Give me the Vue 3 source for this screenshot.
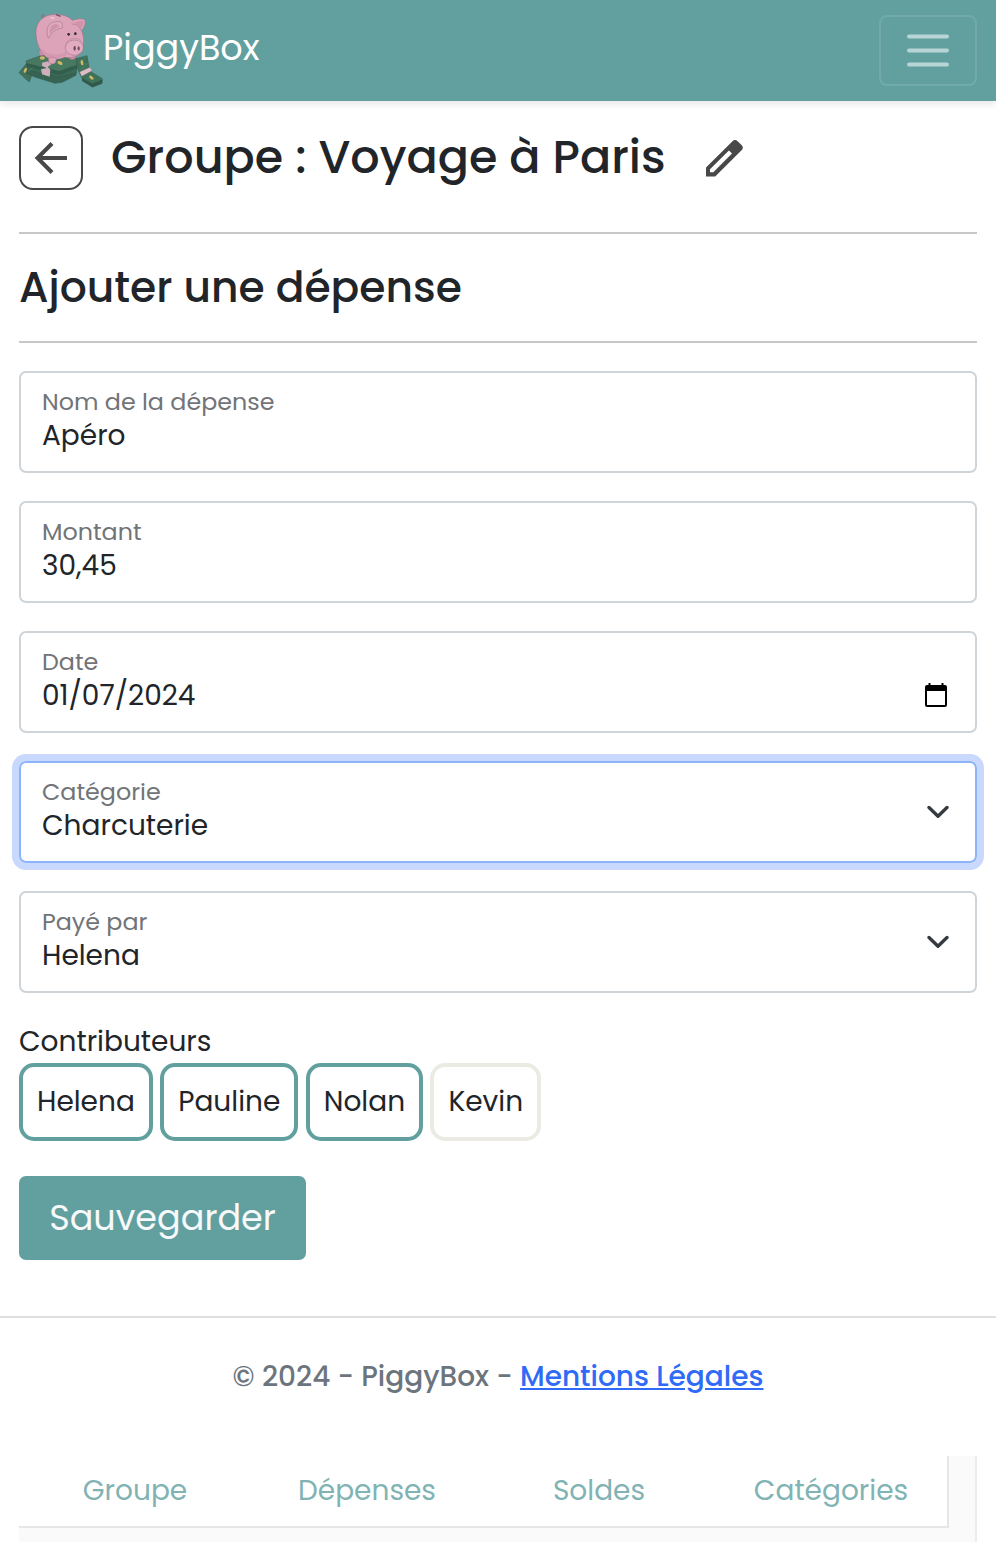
<script setup>
import { ref } from 'vue'

const fields = [
  { id: 'name', label: 'Nom de la dépense', value: 'Apéro' },
  { id: 'amount', label: 'Montant', value: '30,45' },
  { id: 'date', label: 'Date', value: '01/07/2024', icon: 'calendar' },
  { id: 'category', label: 'Catégorie', value: 'Charcuterie', icon: 'chevron', focused: true },
  { id: 'payer', label: 'Payé par', value: 'Helena', icon: 'chevron' },
]

const contributors = ref([
  { name: 'Helena', active: true },
  { name: 'Pauline', active: true },
  { name: 'Nolan', active: true },
  { name: 'Kevin', active: false },
])

const tabs = ['Groupe', 'Dépenses', 'Soldes', 'Catégories']
</script>

<template>
  <div class="page">
    <header class="navbar">
      <div class="brand">
        <svg class="logo" viewBox="54 39 258 225">
          <g stroke="#34564f" stroke-width="1.500" stroke-linejoin="round">
            <path d="M57 218 82 187 112 198 99 215 88 246 74 234Z" fill="#41705b" />
            <path d="M78 214 145 195 228 216 228 226 187 247 165 250 107 232 80 221Z" fill="#376352" />
            <path d="M80 201 142 180 230 205 230 219 176 231 84 211Z" fill="#3a6b55" />
            <path d="M78 183 134 163 232 175 232 195 178 215 80 191Z" fill="#477860" />
            <path d="M80 191 178 215 232 195V203L178 224 82 199Z" fill="#335f50" />
            <path d="M228 176 261 167 267 201 274 216 307 236 306 250 277 261 246 235 233 208Z" fill="#3f725a" />
            <path d="M246 235 277 252 306 240V250L277 261 247 243Z" fill="#305848" />
            <path d="M238 190 257 171M244 208 263 190M84 216 98 203" fill="none" stroke="#6b9275" />
          </g>
          <path d="m126 188 18-4 12 7-13 10 8 8-2 21-23-7-3-15 17-4-14-7Z" fill="#cfafba" />
          <path d="m239 216 31-14 6 10-31 17Z" fill="#dfbdc8" stroke="#8d7880" stroke-width="1" />
          <g fill="#cdb863">
            <ellipse cx="127" cy="174" rx="8" ry="5" />
            <ellipse cx="180" cy="189" rx="8" ry="5" transform="rotate(25 180 189)" />
            <ellipse cx="76" cy="211" rx="4" ry="8" transform="rotate(28 76 211)" />
            <ellipse cx="246" cy="188" rx="4" ry="8" transform="rotate(-10 246 188)" />
            <ellipse cx="274" cy="233" rx="8" ry="4" transform="rotate(38 274 233)" />
          </g>
          <path d="M134 55c-9 1-12-10-5-11 6 0 4 8-2 7" fill="none" stroke="#8f6a7b" stroke-width="3" />
          <g fill="#dda3b9" stroke="#8e6b7b" stroke-width="1.500" stroke-linejoin="round">
            <path d="M119 148c-5 12-1 19 5 19 8 0 11-5 12-9ZM207 155v20c7 7 20 3 22-5l2-12Z" fill="#cb90a8" />
            <path d="M108 101C106 67 129 44 164 43c23-1 42 6 53 18 14-5 31-7 38-1 4 10-4 25-10 32 5 12 8 28 5 45-2 15-12 32-29 34-10 3-20 3-27 1-10 5-21 6-31 6-35 0-53-38-55-77Z" />
            <path d="M145 175c-1 11 4 17 12 17 8 0 12-6 12-16-6-6-17-6-24-1Z" />
          </g>
          <path d="M116 132c13 30 52 42 80 23l6 9c-26 17-68 15-81-13Z" fill="#cb90a8" opacity=".5" />
          <path d="M145 115c-8-22-4-44 17-49 10-2 22-2 25 3-2 6 3 12-1 16-18 1-31 11-41 30Z" fill="#e0a9be" stroke="#956f80" stroke-width="1.500" />
          <path d="M150 103c-3-16 3-28 15-31 6-1 12 2 13 9-12 3-20 9-28 22ZM222 69c12-6 23-7 29-5 1 8-3 17-9 22-3-8-10-14-20-17Z" fill="#d094aa" />
          <path d="M215 72c17 1 25 8 28 20" fill="none" stroke="#956f80" stroke-width="1.500" />
          <ellipse cx="223" cy="143" rx="27" ry="23" fill="#e2abc0" stroke="#936c7d" stroke-width="1.500" />
          <path d="M197 139c1-16 12-23 26-24 12 0 21 5 24 15" fill="none" stroke="#b88a9e" stroke-width="2" />
          <ellipse cx="224" cy="145" rx="3.500" ry="7" fill="#6c4656" />
          <ellipse cx="236" cy="145" rx="3" ry="6.500" fill="#6c4656" />
          <circle cx="206" cy="103" r="4" fill="#2f2b2f" />
          <circle cx="226" cy="101" r="4" fill="#2f2b2f" />
          <path d="m168 44 14 5" stroke="#70505f" stroke-width="4" />
          <ellipse cx="157" cy="54" rx="8" ry="3" fill="#eabfce" />
        </svg>
        <span class="brand-name">PiggyBox</span>
      </div>
      <button class="toggler" aria-label="Menu">
        <svg viewBox="0 0 42 34" width="42" height="34">
          <path d="M2 2.500H40M2 16.500H40M2 30.500H40" stroke="#b7d5d5" stroke-width="4" stroke-linecap="round" />
        </svg>
      </button>
    </header>

    <main class="content">
      <div class="title-row">
        <button class="back" aria-label="Retour">
          <svg viewBox="0 0 60 60" width="60" height="60">
            <path d="M46 30H17M31 15.500 16.500 30 31 44.500" fill="none" stroke="#484848" stroke-width="4" />
          </svg>
        </button>
        <h1>Groupe : Voyage à Paris</h1>
        <svg class="pencil" viewBox="0 0 37 37" width="37" height="37">
          <path fill="#484848" fill-rule="evenodd" d="M0 36.500V27.500L26.500 1.200Q29-1 31.600 1.200L35.500 5Q38 7.500 35.800 10L9.200 36.500ZM4 29.300V32.300H7.300L26 13.600 22.900 10.400Z" />
        </svg>
      </div>

      <h2>Ajouter une dépense</h2>

      <form class="form" @submit.prevent>
        <div v-for="f in fields" :key="f.id" class="field" :class="{ focused: f.focused }">
          <span class="label">{{ f.label }}</span>
          <span class="value">{{ f.value }}</span>
          <svg v-if="f.icon === 'chevron'" class="chevron" viewBox="0 0 22 14" width="22" height="14">
            <path d="M2 2.500 11 11.300 20 2.500" fill="none" stroke="#343a40" stroke-width="3.300" stroke-linecap="round" stroke-linejoin="round" />
          </svg>
          <svg v-if="f.icon === 'calendar'" class="calendar" viewBox="0 0 22 24" width="22" height="24">
            <path fill="#000" fill-rule="evenodd" d="M3.500 0H5.500V2H16.500V0H18.500V2H20Q22 2 22 4V22Q22 24 20 24H2Q0 24 0 22V4Q0 2 2 2H3.500ZM2 8V22H20V8Z" />
          </svg>
        </div>

        <div class="contrib-label">Contributeurs</div>
        <div class="chips">
          <button
            v-for="c in contributors"
            :key="c.name"
            type="button"
            class="chip"
            :class="{ active: c.active }"
            @click="c.active = !c.active"
          >{{ c.name }}</button>
        </div>
        <button class="save">Sauvegarder</button>
      </form>
    </main>

    <footer class="footer">
      <p>© 2024 - PiggyBox - <a class="legal">Mentions Légales</a></p>
    </footer>

    <div class="toolbar">
      <nav class="tabs">
        <a v-for="t in tabs" :key="t">{{ t }}</a>
      </nav>
    </div>
  </div>
</template>

<style>
body {
  background: #fff;
}
</style>

<style scoped>
.page {
  width: 996px;
  height: 1542px;
  overflow: hidden;
  display: flex;
  flex-direction: column;
  font-family: Poppins, Inter, "Liberation Sans", sans-serif;
  font-size: 28px;
  line-height: 34px;
  color: #212529;
}
.page *,
.page {
  box-sizing: border-box;
}
svg {
  display: block;
}
button {
  font: inherit;
  color: inherit;
  background: none;
  padding: 0;
  margin: 0;
  white-space: nowrap;
}
.navbar {
  flex: none;
  height: 101px;
  padding: 0 19px 0 18px;
  display: flex;
  align-items: center;
  justify-content: space-between;
  background: #62a0a0;
  box-shadow: 0 3px 8px rgba(0, 0, 0, 0.1);
}
.brand {
  display: flex;
  align-items: center;
}
.logo {
  width: 86px;
  height: 75px;
}
.brand-name {
  margin: -6px 0 0 -1px;
  font-size: 35px;
  line-height: 42px;
  color: #fff;
}
.toggler {
  width: 98px;
  height: 71px;
  border: 2px solid #72aaaa;
  border-radius: 8px;
  display: grid;
  place-items: center;
}
.content {
  flex: none;
  height: 1215px;
  padding: 25px 19px 0;
}
.title-row {
  height: 108px;
  display: flex;
  align-items: flex-start;
  border-bottom: 2px solid #c8c8c8;
}
.back {
  width: 64px;
  height: 64px;
  border: 2px solid #484848;
  border-radius: 14px;
}
h1 {
  width: 559px;
  margin: 4px 36px 0 28px;
  font-size: 46.06px;
  line-height: 54px;
  font-weight: 500;
  white-space: nowrap;
}
.pencil {
  flex: none;
  margin-top: 14px;
}
h2 {
  margin: 0 0 28px;
  height: 109px;
  padding-top: 28px;
  font-size: 42.4px;
  line-height: 50px;
  font-weight: 500;
  border-bottom: 2px solid #c8c8c8;
}
.field {
  position: relative;
  height: 102px;
  margin-bottom: 28px;
  padding: 12px 21px 0;
  display: flex;
  flex-direction: column;
  border: 2px solid #ced4d8;
  border-radius: 7px;
}
.field.focused {
  border-color: #8bb4fa;
  box-shadow: 0 0 0 7px #c9d8fd;
}
.label {
  font-size: 23.8px;
  line-height: 34px;
  color: #727477;
}
.value {
  line-height: 34px;
}
.chevron {
  position: absolute;
  right: 26px;
  top: 42px;
}
.calendar {
  position: absolute;
  right: 28px;
  top: 50px;
}
.contrib-label {
  height: 42px;
  padding-top: 4px;
}
.chips {
  display: flex;
  gap: 7.4px;
  height: 78px;
}
.chip {
  padding: 0 14px;
  border: 4px solid #ebebe4;
  border-radius: 15px;
}
.chip.active {
  border-color: #62a0a0;
}
.save {
  display: block;
  width: 287px;
  height: 84px;
  margin-top: 35px;
  border: 0;
  border-radius: 7px;
  background: #62a0a0;
  color: #f8f9fa;
  font-size: 35px;
}
.footer {
  flex: none;
  height: 140px;
  padding-top: 42px;
  border-top: 2px solid #dedfe0;
  text-align: center;
  font-weight: 500;
  color: #6c757d;
}
.footer p {
  margin: 0;
}
.legal {
  color: #2f6bf6;
  text-decoration: underline;
}
.toolbar {
  height: 86px;
  margin: 0 19px;
  background: #fafafa;
  border-right: 2px solid #ececec;
}
.tabs {
  width: 930px;
  height: 72px;
  padding-top: 18px;
  display: grid;
  grid-template-columns: repeat(4, 1fr);
  text-align: center;
  background: #fff;
  border: 0 solid #e6e6e6;
  border-width: 0 2px 2px 0;
  color: #81b3b4;
}
</style>
